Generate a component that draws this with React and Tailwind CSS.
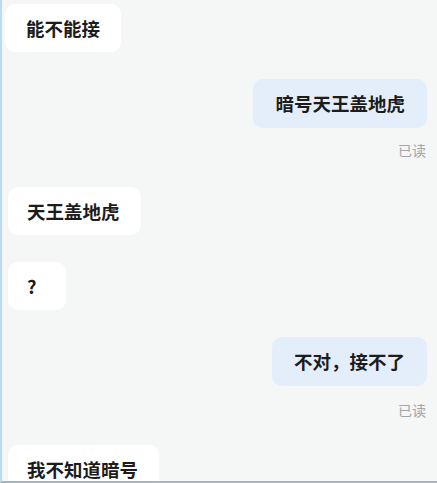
import React from "react";

const font = { fontFamily: '"Noto Sans CJK SC", "Noto Sans", sans-serif' };

function Left({ children, className = "" }) {
  return (
    <div className={"shrink-0 self-start bg-white rounded-[10px] h-[48px] flex items-center pl-[19px] pr-[21px] text-[18.5px] font-bold text-[#1c1c1c] leading-none " + className}>
      {children}
    </div>
  );
}

function Right({ children, className = "" }) {
  return (
    <div className={"shrink-0 self-end bg-[#e4eefb] rounded-[10px] h-[49px] flex items-center px-[22px] text-[18.5px] font-bold text-[#1c1c1c] leading-none " + className}>
      {children}
    </div>
  );
}

function Read({ className = "" }) {
  return (
    <div className={"shrink-0 self-end text-[14px] leading-none text-[#a3a5a6] mr-[1px] " + className}>已读</div>
  );
}

export default function App() {
  return (
    <div style={font} className="w-[437px] h-[483px] overflow-hidden bg-[#f5f6f6] border-l-[2px] border-l-[#b9dcf2] border-b-[2px] border-b-[#a3b5c6] flex flex-col pr-[10px]">
      <Left className="mt-[4px] ml-[3px] !pl-[21px]">能不能接</Left>
      <Right className="mt-[27px]">暗号天王盖地虎</Right>
      <Read className="mt-[15px]" />
      <Left className="mt-[30px] ml-[6px]">天王盖地虎</Left>
      <Left className="mt-[27px] ml-[6px] w-[58px]">?</Left>
      <Right className="mt-[27px]">不对，接不了</Right>
      <Read className="mt-[17px]" />
      <Left className="mt-[28px] ml-[6px]">我不知道暗号</Left>
    </div>
  );
}
